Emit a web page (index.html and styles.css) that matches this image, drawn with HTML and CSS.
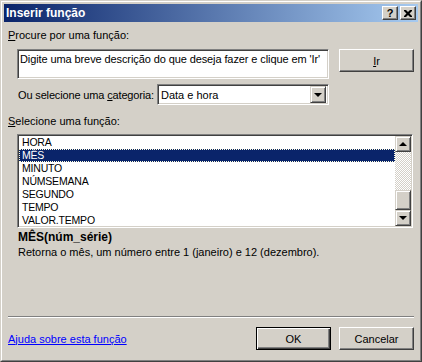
FILE: index.html
```html
<!DOCTYPE html>
<html lang="pt">
<head>
    <meta charset="UTF-8">
    <title>Inserir função</title>
    <link rel="stylesheet" href="styles.css">
</head>
<body>
    <div class="dialog">
        <div class="dialog-inner">
            <div class="titlebar">
                <span class="title">Inserir função</span>
                <div class="caption-buttons">
                    <div class="cap-btn help">?</div>
                    <div class="cap-btn close">
                        <svg width="8" height="7" viewBox="0 0 8 7">
                            <path d="M0 0h2l2 2 2-2h2v1l-2.5 2.5L8 6v1H6L4 5 2 7H0V6l2.5-2.5L0 1z" fill="#000"/>
                        </svg>
                    </div>
                </div>
            </div>

            <div class="content">
                <p class="label"><u>P</u>rocure por uma função:</p>
                <div class="search-row">
                    <div class="textbox">Digite uma breve descrição do que deseja fazer e clique em 'Ir'</div>
                    <button class="btn"><u>I</u>r</button>
                </div>

                <div class="category-row">
                    <span class="category-label">Ou selecione uma <u>c</u>ategoria:</span>
                    <div class="combo">
                        <span class="combo-text">Data e hora</span>
                        <div class="combo-arrow"><span class="tri-down"></span></div>
                    </div>
                </div>

                <p class="label label-list"><u>S</u>elecione uma função:</p>
                <div class="listbox">
                    <ul class="items">
                        <li>HORA</li>
                        <li class="selected">MÊS</li>
                        <li>MINUTO</li>
                        <li>NÚMSEMANA</li>
                        <li>SEGUNDO</li>
                        <li>TEMPO</li>
                        <li>VALOR.TEMPO</li>
                    </ul>
                    <div class="scrollbar">
                        <div class="sb-btn"><span class="tri-up"></span></div>
                        <div class="sb-track"></div>
                        <div class="sb-thumb"></div>
                        <div class="sb-btn"><span class="tri-down"></span></div>
                    </div>
                </div>

                <p class="func-name">MÊS(núm_série)</p>
                <p class="func-desc">Retorna o mês, um número entre 1 (janeiro) e 12 (dezembro).</p>

                <div class="separator"></div>

                <div class="footer">
                    <a class="help-link" href="#">Ajuda sobre esta função</a>
                    <div class="footer-buttons">
                        <button class="btn default">OK</button>
                        <button class="btn">Cancelar</button>
                    </div>
                </div>
            </div>
        </div>
    </div>
</body>
</html>
```

FILE: styles.css
```css
/* Geral */
body {
    margin: 0;
    font-family: 'Liberation Sans', Arial, sans-serif;
    font-size: 11px;
    color: #000;
    background-color: #D4D0C8;
}

/* Moldura da janela */
.dialog {
    width: 422px;
    height: 362px;
    box-sizing: border-box;
    border: 1px solid;
    border-color: #D4D0C8 #404040 #404040 #D4D0C8;
    background-color: #D4D0C8;
}
.dialog-inner {
    height: 100%;
    box-sizing: border-box;
    border: 1px solid;
    border-color: #fff #808080 #808080 #fff;
    padding: 2px;
    display: flex;
    flex-direction: column;
}

/* Barra de titulo */
.titlebar {
    height: 18px;
    flex: none;
    display: flex;
    align-items: center;
    justify-content: space-between;
    padding: 0 2px 0 2px;
    background: linear-gradient(to right, #0A246A, #A6CAF0);
}
.title {
    color: #fff;
    font-weight: bold;
    font-size: 12px;
}
.caption-buttons {
    display: flex;
    gap: 2px;
}
.cap-btn {
    width: 16px;
    height: 14px;
    box-sizing: border-box;
    background-color: #D4D0C8;
    border: 1px solid;
    border-color: #fff #404040 #404040 #fff;
    box-shadow: inset -1px -1px #808080;
    display: flex;
    align-items: center;
    justify-content: center;
}
.cap-btn.help {
    font-weight: bold;
    font-size: 11px;
    line-height: 12px;
}

/* Conteudo */
.content {
    flex: 1;
    padding: 7px 4px 0 4px;
    display: flex;
    flex-direction: column;
}
.label {
    margin: 0;
    line-height: 13px;
    white-space: nowrap;
}
.search-row {
    display: flex;
    gap: 10px;
    margin-top: 7px;
    padding-left: 9px;
}
.textbox {
    width: 312px;
    height: 30px;
    box-sizing: border-box;
    background-color: #fff;
    border: 1px solid;
    border-color: #808080 #fff #fff #808080;
    box-shadow: inset 1px 1px #404040, inset -1px -1px #D4D0C8;
    padding: 3px 2px;
    line-height: 13px;
    white-space: nowrap;
    overflow: hidden;
    letter-spacing: -0.1px;
}
.btn {
    width: 75px;
    height: 23px;
    box-sizing: border-box;
    font-family: inherit;
    font-size: 11px;
    color: #000;
    background-color: #D4D0C8;
    border: 1px solid;
    border-color: #fff #404040 #404040 #fff;
    box-shadow: inset -1px -1px #808080;
    padding: 0;
    border-radius: 0;
}
.btn.default {
    border-color: #000;
    box-shadow: inset 1px 1px #fff, inset -1px -1px #404040, inset -2px -2px #808080;
}

/* Categoria */
.category-row {
    display: flex;
    align-items: center;
    margin-top: 5px;
    padding-left: 10px;
}
.category-label {
    width: 139px;
    flex: none;
    white-space: nowrap;
    letter-spacing: -0.15px;
}
.combo {
    width: 172px;
    height: 21px;
    box-sizing: border-box;
    display: flex;
    align-items: center;
    justify-content: space-between;
    background-color: #fff;
    border: 1px solid;
    border-color: #808080 #fff #fff #808080;
    box-shadow: inset 1px 1px #404040, inset -1px -1px #D4D0C8;
    padding: 2px 2px 2px 3px;
}
.combo-arrow {
    width: 16px;
    height: 17px;
    box-sizing: border-box;
    background-color: #D4D0C8;
    border: 1px solid;
    border-color: #D4D0C8 #404040 #404040 #D4D0C8;
    box-shadow: inset 1px 1px #fff, inset -1px -1px #808080;
    display: flex;
    align-items: center;
    justify-content: center;
}
.tri-down {
    width: 0;
    height: 0;
    border-left: 4px solid transparent;
    border-right: 4px solid transparent;
    border-top: 4px solid #000;
}
.tri-up {
    width: 0;
    height: 0;
    border-left: 4px solid transparent;
    border-right: 4px solid transparent;
    border-bottom: 4px solid #000;
}

/* Lista de funcoes */
.label-list {
    margin-top: 10px;
}
.listbox {
    width: 396px;
    height: 94px;
    box-sizing: border-box;
    margin: 6px 0 0 9px;
    display: flex;
    background-color: #fff;
    border: 1px solid;
    border-color: #808080 #fff #fff #808080;
    box-shadow: inset 1px 1px #404040, inset -1px -1px #D4D0C8;
    padding: 1px;
    overflow: hidden;
}
.items {
    flex: 1;
    list-style: none;
    margin: 0;
    padding: 0;
}
.items li {
    height: 13px;
    line-height: 13px;
    padding-left: 3px;
    font-size: 10.5px;
    letter-spacing: -0.2px;
}
.items li.selected {
    background-color: #0A246A;
    color: #fff;
    outline: 1px dotted #FFD;
    outline-offset: -1px;
}
.scrollbar {
    width: 16px;
    flex: none;
    display: flex;
    flex-direction: column;
}
.sb-btn {
    height: 16px;
    flex: none;
    box-sizing: border-box;
    background-color: #D4D0C8;
    border: 1px solid;
    border-color: #D4D0C8 #404040 #404040 #D4D0C8;
    box-shadow: inset 1px 1px #fff, inset -1px -1px #808080;
    display: flex;
    align-items: center;
    justify-content: center;
}
.sb-track {
    flex: 1;
    background: repeating-conic-gradient(#fff 0 25%, #D4D0C8 0 50%) 0 0 / 2px 2px;
}
.sb-thumb {
    height: 20px;
    flex: none;
    box-sizing: border-box;
    background-color: #D4D0C8;
    border: 1px solid;
    border-color: #D4D0C8 #404040 #404040 #D4D0C8;
    box-shadow: inset 1px 1px #fff, inset -1px -1px #808080;
}

/* Descricao */
.func-name {
    margin: 2px 0 0 10px;
    font-weight: bold;
    font-size: 12px;
    line-height: 14px;
}
.func-desc {
    margin: 2px 0 0 10px;
    line-height: 13px;
}
.separator {
    margin-top: 57px;
    border-top: 1px solid #808080;
    border-bottom: 1px solid #fff;
    height: 0;
}

/* Rodape */
.footer {
    display: flex;
    align-items: center;
    justify-content: space-between;
    margin-top: 9px;
}
.help-link {
    color: #0000FF;
    text-decoration: underline;
}
.footer-buttons {
    display: flex;
    gap: 8px;
}
```
